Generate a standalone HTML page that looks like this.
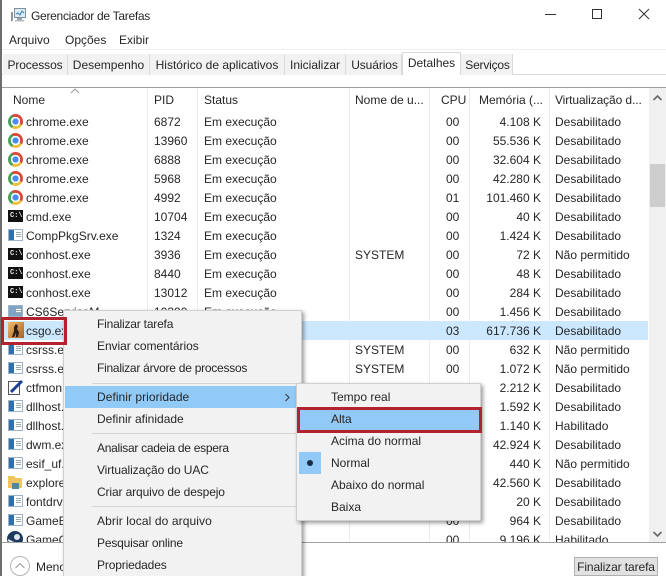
<!DOCTYPE html>
<html><head><meta charset="utf-8">
<style>
html,body{margin:0;padding:0;background:#fff}
#w{position:relative;width:666px;height:576px;overflow:hidden;background:#fff;font:12px/19px "Liberation Sans",sans-serif;color:#262626}
.t{position:absolute;white-space:nowrap;margin-top:1px}
.tab{position:absolute;top:54px;height:21px;line-height:22px;text-align:center;background:#f2f2f2;border-right:1px solid #dcdcdc;box-sizing:border-box}
.sep{position:absolute;top:88px;width:1px;height:454px;background:#ececec}
#rows{position:absolute;left:0;top:112px;width:648px;height:430px;overflow:hidden}
.r{position:absolute;left:0;width:648px;height:19px}
.r span{position:absolute;white-space:nowrap;top:1px}
.n{left:26px}.p{left:154px}.s{left:204px}.u{left:355px}.c{left:446px}.m{right:107px}.v{left:555px}
.i{position:absolute;left:7px;top:1px;width:16px;height:16px}
.ch{left:8px;top:2px;width:15px;height:15px;border-radius:50%;background:radial-gradient(circle,#4a8bf0 0 3px,#fff 3.2px 4.6px,transparent 4.8px),conic-gradient(#d9483b 0 120deg,#eebf3a 120deg 210deg,#45a455 210deg 330deg,#d9483b 330deg)}
.cm{left:8px;top:3px;width:15px;height:12px;background:#111}
.cm:after{content:"C:\\";position:absolute;left:2px;top:1px;color:#eee;font:bold 7px/11px "Liberation Mono",monospace}
.ap{left:8px;top:3px;width:13px;height:10px;border:1px solid #9db4c8;background:linear-gradient(90deg,#2f6fae 0 5px,#fff 5px);}
.ap:after{content:"";position:absolute;left:7px;top:2px;width:5px;height:5px;background:repeating-linear-gradient(#9aa 0 1px,#fff 1px 2px)}
.menu{position:absolute;background:#f2f2f2;border:1px solid #cfcfcf;box-shadow:2px 2px 4px rgba(0,0,0,.4);box-sizing:border-box}
.hl{position:absolute;background:#91c9f7}
.ms{position:absolute;height:1px;background:#d4d4d4}
.red{position:absolute;border:3px solid #b3232f;box-sizing:border-box}
</style></head><body><div id="w">

<div style="position:absolute;left:0;top:0;width:2px;height:576px;background:#6d6d6d"></div>

<svg style="position:absolute;left:10px;top:7px" width="17" height="16" viewBox="0 0 17 16"><rect x="4.5" y="1.5" width="11" height="9" fill="#dcebf5" stroke="#7f8f9c"/><path d="M6 7l2-1 2 2 2-4 2 2" fill="none" stroke="#3b86b5"/><rect x="7" y="11" width="5" height="2" fill="#9aa5ad"/><rect x="5" y="13" width="9" height="1.5" fill="#b5bcc2"/><rect x="1" y="5" width="2" height="9" fill="#8e979e"/></svg>
<div class="t" style="left:31px;top:6px;letter-spacing:-.28px">Gerenciador de Tarefas</div>

<svg style="position:absolute;left:545px;top:5px" width="110" height="20" viewBox="0 0 110 20"><path d="M0 9.500H11" stroke="#333" fill="none"/><rect x="47.500" y="4.500" width="9" height="9" fill="none" stroke="#333"/><path d="M94 4l10 10M104 4L94 14" stroke="#333" fill="none"/></svg>

<div class="t" style="left:9px;top:30px">Arquivo</div>
<div class="t" style="left:65px;top:30px">Opções</div>
<div class="t" style="left:119px;top:30px">Exibir</div>

<div style="position:absolute;left:2px;top:49px;width:664px;height:1px;background:#efefef"></div>
<div style="position:absolute;left:2px;top:74px;width:664px;height:1px;background:#d9d9d9"></div>
<div class="tab" style="left:3px;width:65px;letter-spacing:-.1px">Processos</div>
<div class="tab" style="left:68px;width:82px">Desempenho</div>
<div class="tab" style="left:150px;width:135px">Histórico de aplicativos</div>
<div class="tab" style="left:285px;width:61px">Inicializar</div>
<div class="tab" style="left:346px;width:56px;padding-left:2px;letter-spacing:-.1px">Usuários</div>
<div class="tab" style="left:402px;top:52px;width:59px;height:23px;background:#fff;border:1px solid #d9d9d9;border-bottom:0;line-height:21px">Detalhes</div>
<div class="tab" style="left:461px;width:52px;border-right:1px solid #d9d9d9;padding-left:2px;letter-spacing:-.2px">Serviços</div>

<div style="position:absolute;left:2px;top:87px;width:664px;height:1px;background:#a0a0a0"></div>
<svg style="position:absolute;left:70px;top:88px" width="10" height="6" viewBox="0 0 10 6"><path d="M1 5l4-4 4 4" fill="none" stroke="#999"/></svg>

<div class="sep" style="left:147px"></div>
<div class="sep" style="left:197px"></div>
<div class="sep" style="left:349px"></div>
<div class="sep" style="left:429px"></div>
<div class="sep" style="left:469px"></div>
<div class="sep" style="left:549px"></div>

<div class="t" style="left:13px;top:90px">Nome</div>
<div class="t" style="left:154px;top:90px">PID</div>
<div class="t" style="left:204px;top:90px">Status</div>
<div class="t" style="left:355px;top:90px">Nome de u...</div>
<div class="t" style="left:441px;top:90px">CPU</div>
<div class="t" style="left:479px;top:90px">Memória (...</div>
<div class="t" style="left:555px;top:90px;letter-spacing:-.1px">Virtualização d...</div>

<div style="position:absolute;left:649px;top:88px;width:17px;height:454px;background:#f0f0f0"></div>
<div style="position:absolute;left:650px;top:164px;width:15px;height:43px;background:#cdcdcd"></div>
<svg style="position:absolute;left:652px;top:94px" width="11" height="8" viewBox="0 0 11 8"><path d="M1.500 6L5.500 2l4 4" fill="none" stroke="#666" stroke-width="1.600"/></svg>
<svg style="position:absolute;left:652px;top:530px" width="11" height="8" viewBox="0 0 11 8"><path d="M1.500 2L5.500 6l4-4" fill="none" stroke="#666" stroke-width="1.600"/></svg>

<div style="position:absolute;left:3px;top:321px;width:645px;height:19px;background:#cce8ff"></div>

<div id="rows">
<div class="r" style="top:0"><i class="i ch"></i><span class="n">chrome.exe</span><span class="p">6872</span><span class="s">Em execução</span><span class="c">00</span><span class="m">4.108 K</span><span class="v">Desabilitado</span></div>
<div class="r" style="top:19px"><i class="i ch"></i><span class="n">chrome.exe</span><span class="p">13960</span><span class="s">Em execução</span><span class="c">00</span><span class="m">55.536 K</span><span class="v">Desabilitado</span></div>
<div class="r" style="top:38px"><i class="i ch"></i><span class="n">chrome.exe</span><span class="p">6888</span><span class="s">Em execução</span><span class="c">00</span><span class="m">32.604 K</span><span class="v">Desabilitado</span></div>
<div class="r" style="top:57px"><i class="i ch"></i><span class="n">chrome.exe</span><span class="p">5968</span><span class="s">Em execução</span><span class="c">00</span><span class="m">42.280 K</span><span class="v">Desabilitado</span></div>
<div class="r" style="top:76px"><i class="i ch"></i><span class="n">chrome.exe</span><span class="p">4992</span><span class="s">Em execução</span><span class="c">01</span><span class="m">101.460 K</span><span class="v">Desabilitado</span></div>
<div class="r" style="top:95px"><i class="i cm"></i><span class="n">cmd.exe</span><span class="p">10704</span><span class="s">Em execução</span><span class="c">00</span><span class="m">40 K</span><span class="v">Desabilitado</span></div>
<div class="r" style="top:114px"><i class="i ap"></i><span class="n">CompPkgSrv.exe</span><span class="p">1324</span><span class="s">Em execução</span><span class="c">00</span><span class="m">1.424 K</span><span class="v">Desabilitado</span></div>
<div class="r" style="top:133px"><i class="i cm"></i><span class="n">conhost.exe</span><span class="p">3936</span><span class="s">Em execução</span><span class="u">SYSTEM</span><span class="c">00</span><span class="m">72 K</span><span class="v">Não permitido</span></div>
<div class="r" style="top:152px"><i class="i cm"></i><span class="n">conhost.exe</span><span class="p">8440</span><span class="s">Em execução</span><span class="c">00</span><span class="m">48 K</span><span class="v">Desabilitado</span></div>
<div class="r" style="top:171px"><i class="i cm"></i><span class="n">conhost.exe</span><span class="p">13012</span><span class="s">Em execução</span><span class="c">00</span><span class="m">284 K</span><span class="v">Desabilitado</span></div>
<div class="r" style="top:190px"><i class="i ap" style="background:#7fa3c4"></i><span class="n">CS6ServiceM</span><span class="p">10300</span><span class="s">Em execução</span><span class="c">00</span><span class="m">1.456 K</span><span class="v">Desabilitado</span></div>
<div class="r" style="top:209px"><svg class="i" style="left:8px" viewBox="0 0 16 16"><defs><linearGradient id="g" x1="0" y1="0" x2="1" y2="1"><stop offset="0" stop-color="#f0bb6e"/><stop offset="1" stop-color="#a85f22"/></linearGradient></defs><rect width="16" height="16" fill="url(#g)"/><path d="M8 2l2 2-1 3 2 3-1 5H8l0-4-2 4H4l2-6 0-4z" fill="#2c2118"/></svg><span class="n">csgo.exe</span><span class="c">03</span><span class="m">617.736 K</span><span class="v">Desabilitado</span></div>
<div class="r" style="top:228px"><i class="i ap"></i><span class="n">csrss.exe</span><span class="u">SYSTEM</span><span class="c">00</span><span class="m">632 K</span><span class="v">Não permitido</span></div>
<div class="r" style="top:247px"><i class="i ap"></i><span class="n">csrss.exe</span><span class="u">SYSTEM</span><span class="c">00</span><span class="m">1.072 K</span><span class="v">Não permitido</span></div>
<div class="r" style="top:266px"><svg class="i" style="left:8px" viewBox="0 0 16 16"><rect x="0.500" y="2.500" width="11" height="13" fill="#fff" stroke="#555"/><path d="M3 13L14 2" stroke="#1c3f94" stroke-width="3"/></svg><span class="n">ctfmon.exe</span><span class="c">00</span><span class="m">2.212 K</span><span class="v">Desabilitado</span></div>
<div class="r" style="top:285px"><i class="i ap"></i><span class="n">dllhost.exe</span><span class="c">00</span><span class="m">1.592 K</span><span class="v">Desabilitado</span></div>
<div class="r" style="top:304px"><i class="i ap"></i><span class="n">dllhost.exe</span><span class="c">00</span><span class="m">1.140 K</span><span class="v">Habilitado</span></div>
<div class="r" style="top:323px"><i class="i ap"></i><span class="n">dwm.exe</span><span class="c">00</span><span class="m">42.924 K</span><span class="v">Desabilitado</span></div>
<div class="r" style="top:342px"><i class="i ap"></i><span class="n">esif_uf.exe</span><span class="c">00</span><span class="m">440 K</span><span class="v">Não permitido</span></div>
<div class="r" style="top:361px"><svg class="i" viewBox="0 0 16 16"><path d="M1 2h6l2 2h6v10H1z" fill="#f0c659"/><rect x="5" y="9" width="7" height="6" fill="#4f8a9c"/></svg><span class="n">explorer.exe</span><span class="c">00</span><span class="m">42.560 K</span><span class="v">Desabilitado</span></div>
<div class="r" style="top:380px"><i class="i ap"></i><span class="n">fontdrvhost</span><span class="c">00</span><span class="m">20 K</span><span class="v">Desabilitado</span></div>
<div class="r" style="top:399px"><i class="i ap"></i><span class="n">GameBar</span><span class="c">00</span><span class="m">964 K</span><span class="v">Desabilitado</span></div>
<div class="r" style="top:418px"><svg class="i" viewBox="0 0 16 16"><circle cx="8" cy="8" r="8" fill="#1c3a5e"/><circle cx="10" cy="6" r="3" fill="#dfe6ec"/><path d="M1 9l6 3" stroke="#dfe6ec" stroke-width="2"/></svg><span class="n">GameC</span><span class="c">00</span><span class="m">9.196 K</span><span class="v">Habilitado</span></div>
</div>

<div style="position:absolute;left:2px;top:542px;width:664px;height:1px;background:#a0a0a0"></div>

<svg style="position:absolute;left:9px;top:555px" width="23" height="21" viewBox="0 0 23 21"><circle cx="11" cy="11" r="9.500" fill="#fff" stroke="#b5b5b5"/><path d="M6.500 13L11 8.500 15.500 13" fill="none" stroke="#aaa" stroke-width="1.300"/></svg>
<div class="t" style="left:36px;top:557px">Menos detalhes</div>

<div style="position:absolute;left:574px;top:557px;width:84px;height:19px;background:#e1e1e1;border:1px solid #b0b0b0;box-sizing:border-box;text-align:center;line-height:19px;letter-spacing:-.1px">Finalizar tarefa</div>

<div class="menu" style="left:63px;top:310px;width:239px;height:270px"></div>
<div class="hl" style="left:65px;top:386px;width:232px;height:22px"></div>
<div class="ms" style="left:92px;top:383px;width:205px"></div>
<div class="ms" style="left:92px;top:433px;width:205px"></div>
<div class="ms" style="left:92px;top:506px;width:205px"></div>
<div class="t" style="left:97px;top:314px;letter-spacing:-.2px">Finalizar tarefa</div>
<div class="t" style="left:97px;top:336px;letter-spacing:-.06px">Enviar comentários</div>
<div class="t" style="left:97px;top:358px;letter-spacing:-.25px">Finalizar árvore de processos</div>
<div class="t" style="left:97px;top:387px;letter-spacing:.05px">Definir prioridade</div>
<div class="t" style="left:97px;top:409px">Definir afinidade</div>
<div class="t" style="left:97px;top:438px;letter-spacing:-.28px">Analisar cadeia de espera</div>
<div class="t" style="left:97px;top:460px;letter-spacing:-.1px">Virtualização do UAC</div>
<div class="t" style="left:97px;top:482px;letter-spacing:-.12px">Criar arquivo de despejo</div>
<div class="t" style="left:97px;top:511px;letter-spacing:.1px">Abrir local do arquivo</div>
<div class="t" style="left:97px;top:533px;letter-spacing:-.18px">Pesquisar online</div>
<div class="t" style="left:97px;top:555px;letter-spacing:-.15px">Propriedades</div>
<svg style="position:absolute;left:284px;top:393px" width="7" height="9" viewBox="0 0 7 9"><path d="M1.500 1l3.500 3.500L1.500 8" fill="none" stroke="#333"/></svg>

<div class="menu" style="left:296px;top:383px;width:185px;height:138px"></div>
<div class="hl" style="left:299px;top:409px;width:180px;height:22px"></div>
<div class="hl" style="left:299px;top:452px;width:22px;height:22px"></div>
<div style="position:absolute;left:307px;top:460px;width:6px;height:6px;border-radius:50%;background:#1a2a40"></div>
<div class="t" style="left:331px;top:387px">Tempo real</div>
<div class="t" style="left:331px;top:409px">Alta</div>
<div class="t" style="left:331px;top:431px">Acima do normal</div>
<div class="t" style="left:331px;top:453px">Normal</div>
<div class="t" style="left:331px;top:475px">Abaixo do normal</div>
<div class="t" style="left:331px;top:497px">Baixa</div>

<div class="red" style="left:297px;top:407px;width:185px;height:26px"></div>
<div class="red" style="left:1px;top:317px;width:66px;height:28px"></div>

</div></body></html>
